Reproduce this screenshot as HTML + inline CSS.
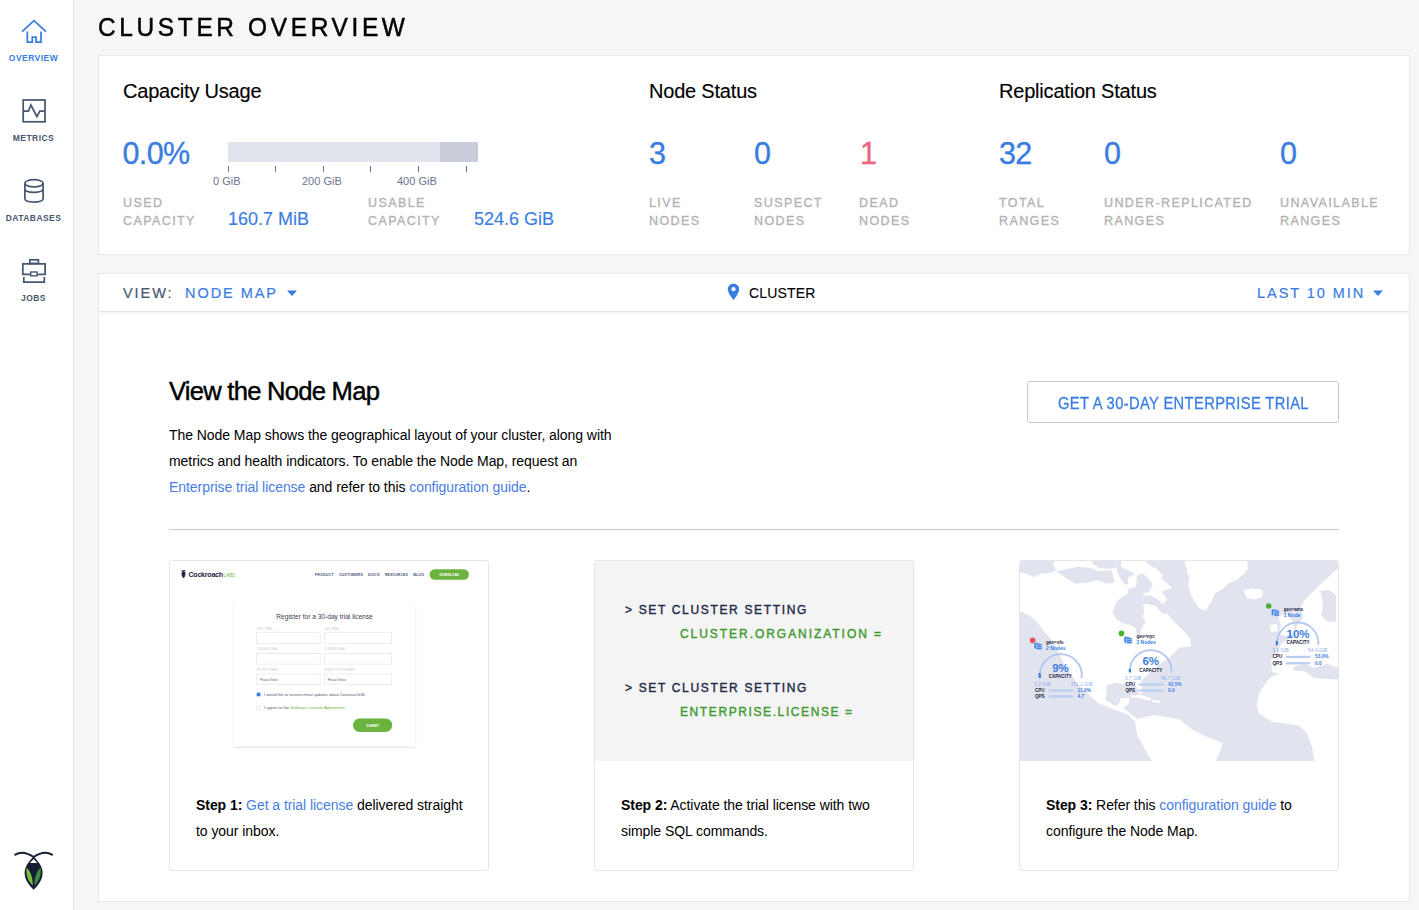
<!DOCTYPE html>
<html><head><meta charset="utf-8">
<style>
*{margin:0;padding:0;box-sizing:border-box}
html,body{width:1419px;height:910px;overflow:hidden;background:#f6f6f6;font-family:"Liberation Sans",sans-serif;color:#000}
.a{position:absolute;white-space:nowrap}
#side{position:absolute;left:0;top:0;width:74px;height:910px;background:#fff;border-right:1px solid #e8e8e8}
.card{position:absolute;background:#fff;border:1px solid #e9e9e9}
.h3{font-size:20px;color:#000;line-height:22px;letter-spacing:-0.2px;-webkit-text-stroke:0.15px currentColor}
.big{font-size:30.5px;color:#3a7de1;line-height:34px;letter-spacing:-0.6px;-webkit-text-stroke:0.35px currentColor}
.lbl{font-size:12.5px;font-weight:normal;color:#b3b3b3;letter-spacing:1.4px;line-height:18px;-webkit-text-stroke:0.35px currentColor}
.val{font-size:18px;color:#3a7de1;line-height:20px;-webkit-text-stroke:0.15px currentColor}
.tick{position:absolute;top:166px;width:1px;height:6px;background:#6c7390}
.tl{font-size:11px;color:#6c7390;line-height:12px}
.nav{position:absolute;left:0;width:67px;text-align:center;font-size:8.5px;font-weight:bold;color:#475872;letter-spacing:0.45px;line-height:10px}
.vb{font-size:14.5px;letter-spacing:1.95px;line-height:16px;-webkit-text-stroke:0.2px currentColor}
.p{font-size:14px;line-height:26px;color:#000;letter-spacing:-0.06px}
.lk{color:#4a7ee3}
.step{position:absolute;top:560px;width:320px;height:311px;background:#fff;border:1px solid #e6e6e6;border-radius:3px;overflow:hidden}
.sq{font-size:12px;font-weight:normal;letter-spacing:1.66px;line-height:14px;-webkit-text-stroke:0.4px currentColor}
</style></head><body>
<div id="side">
  <svg class="a" style="left:0;top:0" width="74" height="310" viewBox="0 0 74 310">
    <g fill="none" stroke-width="1.75" stroke-linejoin="miter">
      <path d="M22.6 31.2 L34 20.6 L45.4 31.2" stroke="#3a7de1" stroke-linecap="round"/>
      <path d="M27.3 31.5 V42 H32.3 V37.2 H36 V42 H41 V31.5" stroke="#3a7de1"/>
      <rect x="23.2" y="100" width="21.8" height="21.8" stroke="#475872"/>
      <path d="M23.2 111 H28.5 L30.9 105 L36.9 116.5 L39.8 111 H45" stroke="#475872"/>
      <ellipse cx="34" cy="183.3" rx="9.1" ry="3.6" stroke="#475872"/>
      <path d="M24.9 183.3 V198.5 C24.9 203.2 43.1 203.2 43.1 198.5 V183.3 M24.9 188.8 C24.9 193.6 43.1 193.6 43.1 188.8" stroke="#475872"/>
      <rect x="29.8" y="259.8" width="8.6" height="3.6" stroke="#475872"/>
      <path d="M22.8 274.4 V263.8 H45.1 V274.4 Z" stroke="#475872"/>
      <rect x="30.7" y="272" width="6.4" height="3.8" stroke="#475872" stroke-width="1.4" fill="#fff"/>
      <path d="M23.8 277 V282.2 H44.3 V277" stroke="#475872"/>
    </g>
  </svg>
  <div class="nav" style="top:53px;color:#3a7de1">OVERVIEW</div>
  <div class="nav" style="top:133px">METRICS</div>
  <div class="nav" style="top:213px">DATABASES</div>
  <div class="nav" style="top:293px">JOBS</div>
  <svg class="a" style="left:14px;top:850px" width="40" height="42" viewBox="0 0 40 42">
    <path d="M1.3 4.6 C6 1.6 12 1.8 19.6 7 C27.2 1.8 33.2 1.6 37.9 4.6" fill="none" stroke="#151c35" stroke-width="2" stroke-linecap="round"/>
    <path d="M19.6 6.4 C13.5 12.5 10.6 17.5 10.6 23 C10.8 30 15 35.2 19.6 39.8 C24.2 35.2 28.4 30 28.6 23 C28.6 17.5 25.7 12.5 19.6 6.4 Z" fill="#151c35"/>
    <path d="M19.6 8.9 L15.9 13.1 L23.3 13.1 Z" fill="#fff"/>
    <path d="M12.6 17.6 C11.6 25 13.8 31 18.7 35.8 C18.9 28 16.8 22 12.6 17.6 Z" fill="#7dbd42"/>
    <path d="M26.6 17.6 C27.6 25 25.4 31 20.5 35.8 C20.3 28 22.4 22 26.6 17.6 Z" fill="#3c8c40"/>
  </svg>
</div>

<div class="a" style="left:98px;top:12px;font-size:26.6px;letter-spacing:3.95px;color:#000;line-height:30px;-webkit-text-stroke:0.5px #000;transform:scaleX(0.92);transform-origin:0 0">CLUSTER OVERVIEW</div>

<div class="card" style="left:98px;top:55px;width:1312px;height:200px"></div>
<div class="a h3" style="left:123px;top:79.5px">Capacity Usage</div>
<div class="a big" style="left:122.5px;top:136px">0.0%</div>
<div class="a" style="left:228px;top:142px;width:250px;height:20px;background:#e2e4ed"></div>
<div class="a" style="left:440px;top:142px;width:38px;height:20px;background:#c9ccd9"></div>
<div class="tick" style="left:228px"></div>
<div class="tick" style="left:275px"></div>
<div class="tick" style="left:323px"></div>
<div class="tick" style="left:370px"></div>
<div class="tick" style="left:418px"></div>
<div class="tick" style="left:466px"></div>
<div class="a tl" style="left:213px;top:175px">0 GiB</div>
<div class="a tl" style="left:302px;top:175px">200 GiB</div>
<div class="a tl" style="left:397px;top:175px">400 GiB</div>
<div class="a lbl" style="left:123px;top:194px">USED<br>CAPACITY</div>
<div class="a val" style="left:228px;top:209px">160.7 MiB</div>
<div class="a lbl" style="left:368px;top:194px">USABLE<br>CAPACITY</div>
<div class="a val" style="left:474px;top:209px">524.6 GiB</div>

<div class="a h3" style="left:649px;top:79.5px">Node Status</div>
<div class="a big" style="left:649px;top:136px">3</div>
<div class="a big" style="left:754px;top:136px">0</div>
<div class="a big" style="left:860px;top:136px;color:#e8697a">1</div>
<div class="a lbl" style="left:649px;top:194px">LIVE<br>NODES</div>
<div class="a lbl" style="left:754px;top:194px">SUSPECT<br>NODES</div>
<div class="a lbl" style="left:859px;top:194px">DEAD<br>NODES</div>

<div class="a h3" style="left:999px;top:79.5px">Replication Status</div>
<div class="a big" style="left:999px;top:136px">32</div>
<div class="a big" style="left:1104px;top:136px">0</div>
<div class="a big" style="left:1280px;top:136px">0</div>
<div class="a lbl" style="left:999px;top:194px">TOTAL<br>RANGES</div>
<div class="a lbl" style="left:1104px;top:194px">UNDER-REPLICATED<br>RANGES</div>
<div class="a lbl" style="left:1280px;top:194px">UNAVAILABLE<br>RANGES</div>

<div class="card" style="left:98px;top:273px;width:1312px;height:629px"></div>
<div class="a" style="left:99px;top:311px;width:1310px;height:1px;background:#e3e3e3"></div><div class="a" style="left:99px;top:312px;width:1310px;height:3px;background:linear-gradient(#f3f3f3,#fff)"></div>
<div class="a vb" style="left:123px;top:285px;color:#475872">VIEW:</div>
<div class="a vb" style="left:185px;top:285px;color:#3a7de1">NODE MAP</div>
<svg class="a" style="left:287px;top:290px" width="11" height="7"><path d="M0 0.5 H10 L5 6 Z" fill="#3a7de1"/></svg>
<svg class="a" style="left:727px;top:283px" width="13" height="18" viewBox="0 0 13 18"><path d="M6.5 0.8 C3 0.8 0.8 3.4 0.8 6.4 C0.8 10 6.5 17 6.5 17 C6.5 17 12.2 10 12.2 6.4 C12.2 3.4 10 0.8 6.5 0.8 Z" fill="#3a7de1"/><circle cx="6.5" cy="6.2" r="2.1" fill="#fff"/></svg>
<div class="a vb" style="left:749px;top:285px;color:#000;font-size:14px;letter-spacing:0.15px;-webkit-text-stroke:0.1px #000">CLUSTER</div>
<div class="a vb" style="left:1257px;top:285px;color:#3a7de1">LAST 10 MIN</div>
<svg class="a" style="left:1373px;top:290px" width="11" height="7"><path d="M0 0.5 H10 L5 6 Z" fill="#3a7de1"/></svg>

<div class="a" style="left:169px;top:377px;font-size:25.6px;letter-spacing:-0.75px;line-height:28px;-webkit-text-stroke:0.45px #000">View the Node Map</div>
<div class="a p" style="left:169px;top:422px">The Node Map shows the geographical layout of your cluster, along with<br>metrics and health indicators. To enable the Node Map, request an<br><span class="lk">Enterprise trial license</span> and refer to this <span class="lk">configuration guide</span>.</div>
<div class="a" style="left:1027px;top:381px;width:312px;height:42px;border:1px solid #c5c8d4;border-radius:3px;background:#fff"></div>
<div class="a" style="left:1058px;top:394.5px;font-size:16px;color:#3a7de1;letter-spacing:0.4px;-webkit-text-stroke:0.3px #3a7de1;transform:scaleX(0.92);transform-origin:0 0;line-height:18px">GET A 30-DAY ENTERPRISE TRIAL</div>
<div class="a" style="left:169px;top:529px;width:1170px;height:1px;background:#c9ccd8"></div>

<!-- step cards -->
<div class="step" style="left:169px">
<svg class="a" style="left:-1px;top:-1px" width="320" height="201" viewBox="0 0 320 201">
<rect width="320" height="201" fill="#fff"/>
<path d="M12.5 10.5 h4 M13.4 11.5 c-1 2 -0.5 5 1.1 6.5 c1.6 -1.5 2.1 -4.5 1.1 -6.5 z" fill="#1c2542" stroke="#1c2542" stroke-width="0.7"/>
<text x="19.5" y="17" font-family="Liberation Sans, sans-serif" font-size="7" font-weight="bold" fill="#1c2542" letter-spacing="-0.2">Cockroach</text>
<text x="54.5" y="17" font-family="Liberation Sans, sans-serif" font-size="4.5" fill="#6bb33e">LABS</text>
<g font-family="Liberation Sans, sans-serif" font-size="3.3" font-weight="bold" fill="#4a5578" letter-spacing="0.1">
<text x="145.8" y="16" textLength="18.8" lengthAdjust="spacingAndGlyphs">PRODUCT</text><text x="169.9" y="16" textLength="24.1" lengthAdjust="spacingAndGlyphs">CUSTOMERS</text><text x="199" y="16" textLength="11.6" lengthAdjust="spacingAndGlyphs">DOCS</text><text x="215.9" y="16" textLength="23" lengthAdjust="spacingAndGlyphs">RESOURCES</text><text x="244.2" y="16" textLength="11.1" lengthAdjust="spacingAndGlyphs">BLOG</text>
</g>
<rect x="260.6" y="9.3" width="39.4" height="10.4" rx="5.2" fill="#6bb33e"/>
<text x="280.3" y="15.8" text-anchor="middle" font-family="Liberation Sans, sans-serif" font-size="3.3" font-weight="bold" fill="#fff">DOWNLOAD</text>
<defs><filter id="fs" x="-10%" y="-10%" width="120%" height="125%"><feDropShadow dx="0" dy="1" stdDeviation="1.2" flood-color="#8a94ad" flood-opacity="0.35"/></filter></defs>
<rect x="64.8" y="43.2" width="181.3" height="143.2" fill="#fff" filter="url(#fs)"/>
<text x="155.5" y="58.5" text-anchor="middle" font-family="Liberation Sans, sans-serif" font-size="6.6" fill="#3b4154">Register for a 30-day trial license</text>
<g fill="#c8ccd6" font-family="Liberation Sans, sans-serif" font-size="2.6">
<text x="87.7" y="69.5">FIRST NAME</text><text x="155.4" y="69.5">LAST NAME</text>
<text x="87.7" y="90.3">COMPANY NAME</text><text x="155.4" y="90.3">COMPANY EMAIL</text>
<text x="87.7" y="111.1">PROJECT PHASE</text><text x="155.4" y="111.1">REASON FOR INTEREST</text>
</g>
<g fill="#fff" stroke="#dfe2e8" stroke-width="0.6">
<rect x="87.7" y="72.2" width="63.4" height="11.4"/><rect x="155.4" y="72.2" width="67.3" height="11.4"/>
<rect x="87.7" y="93.3" width="63.4" height="10.8"/><rect x="155.4" y="93.3" width="67.3" height="10.8"/>
<rect x="87.7" y="114" width="63.4" height="10.7"/><rect x="155.4" y="114" width="67.3" height="10.7"/>
</g>
<g fill="#555b6e" font-family="Liberation Sans, sans-serif" font-size="3">
<text x="91" y="120.5">Please Select</text><text x="158.7" y="120.5">Please Select</text>
<text x="95" y="135.6" textLength="101.6" lengthAdjust="spacingAndGlyphs">I would like to receive email updates about CockroachDB.</text>
<text x="95" y="149" textLength="82" lengthAdjust="spacingAndGlyphs">I agree to the <tspan fill="#6bb33e">Software License Agreement.</tspan></text>
</g>
<rect x="87.7" y="132.7" width="3.7" height="3.6" fill="#3a7de1"/>
<rect x="87.9" y="146" width="3.3" height="3.3" fill="none" stroke="#c8ccd6" stroke-width="0.4"/>
<rect x="184" y="158.6" width="39.2" height="13.3" rx="6.6" fill="#6bb33e"/>
<text x="203.6" y="166.5" text-anchor="middle" font-family="Liberation Sans, sans-serif" font-size="3.3" font-weight="bold" fill="#fff">SUBMIT</text>
</svg>
</div>
<div class="step" style="left:594px">
  <div class="a" style="left:0;top:0;width:320px;height:200px;background:#f4f4f4"></div>
  <div class="a sq" style="left:30px;top:42px;color:#1f2a48">&gt; SET CLUSTER SETTING</div>
  <div class="a sq" style="left:85px;top:66px;color:#3f9a2f;letter-spacing:1.95px">CLUSTER.ORGANIZATION =</div>
  <div class="a sq" style="left:30px;top:120px;color:#1f2a48">&gt; SET CLUSTER SETTING</div>
  <div class="a sq" style="left:85px;top:144px;color:#3f9a2f;letter-spacing:1.6px">ENTERPRISE.LICENSE =</div>
</div>
<div class="step" style="left:1019px">
<svg class="a" style="left:-1px;top:-1px" width="320" height="201" viewBox="0 0 320 201">
<rect width="320" height="201" fill="#e1e4ee"/>
<g fill="#fff">
<path d="M0 0 L129.5 0 L126.8 1.8 L130.3 5.3 L137.4 8.8 L143.5 14.9 L142.6 19.3 L147.9 22.9 L153.2 28.1 L142.6 31.6 L147.9 39.6 L144.4 44 L137.4 45.7 L139.1 49.2 L144.4 54.5 L147.9 52.7 L154.9 61.5 L165.5 72.1 L171 78 L172 86 L160 88 L151 97 L138 106 L125 118 L122 122 L124 133 L121 134 L117 126 L108 124 L96 123 L88 125 L86.6 140 L96 146 L100 144 L102 138 L110 138 L110 144 L104 148 L118 159 L135 155 L160 159 L173 169.6 L186 176 L203.5 183 L202 189 L197 201 L132.7 201 L123.5 185 L118 175 L116 162 L110 155 L96 150 L79 143 L58 123.5 L43 100 L38 88 L34 82 L30 77 L24 70 L18 62 L10 55 L0 51 Z"/>
<path d="M111.6 135 L122 134.5 L132.7 139 L130 140.6 L120 138 L111.6 137 Z M133 140 L142 141 L140 143 L133 142 Z"/>
<path d="M166 0 L228 0 L229 9 L226 13 L218 20 L210 23 L205 28 L196 33 L193 40 L190 45 L187 51 L180 48 L176 42 L172 35 L169 25 L171 17 L168 14 L168 9 L166 4 Z"/>
<path d="M225 30 L232 28.6 L240 29 L244 31 L243 37 L236 39.6 L228 38 L226 34 Z"/>
<path d="M320 8 L320 108 L308 104 L295 108 L286 104 L276 106 L272 113 L262 114 L253 112 L252 100 L258 92 L262 84 L268 80 L274 76 L278 66 L284 58 L282 46 L286 39.6 L297 28.6 L306 20 L317 10 Z"/>
<path d="M259 56 L268 54 L274 62 L276 72 L268 76 L260 74 L262 65 Z M251 65 L258 64 L259 71 L252 72.5 Z"/>
<path d="M250.5 118 L269 110 L286 111.6 L295 118 L320 119.5 L320 201 L295.3 201 L292.7 185.4 L287.4 172 L279.5 165.6 L253 161.7 L240 153.8 L237.7 145 L240 132.7 Z"/>
</g>
<g fill="#e1e4ee">
<path d="M93.4 52.7 L96.9 42.2 L102.2 37.8 L109.2 33.4 L109.2 29 L117.1 26.4 L118 15.8 L123.3 13.2 L128.6 17.6 L133.8 24.6 L130.3 31.6 L124.2 34.3 L123.3 36 L131.2 35.2 L139.1 39.6 L144.4 44.8 L139.1 47.5 L135.6 45.7 L128.6 44 L124.2 44 L125.1 52.7 L123.3 56.3 L126.8 61.5 L123.3 66.8 L121.5 70.3 L121.5 75.6 L118 75.6 L116.3 67.7 L111 65 L104 63.3 L97.8 59.8 Z"/>
<path d="M0 0 L36 0 L34 4.5 L37 10 L33 12.4 L22.5 13.5 L14.7 17 L6.8 13.5 L0 12.4 Z"/>
<path d="M37.2 11.3 L48.5 9 L58.6 6.8 L72 8 L79 11.3 L92.4 10 L95.8 22.5 L88 23.7 L79 20.3 L67.6 22.5 L56.4 23.7 L48.5 19.2 Z"/>
<path d="M72 0 L101 0 L100 6 L92 9 L80 8 L74 4 Z"/>
<path d="M95.2 0 L102.2 0 L102.2 7 L109.2 10.5 L116.3 14 L109.2 17.6 L109.2 24.6 L105.7 24.6 L100.4 17.6 L97.8 8.8 Z"/>
<path d="M301.5 31 L310 30 L317 35 L317 61.5 L308 61.5 L302 55 L304 45 Z"/>
</g>
<g fill="none" stroke="#b0c6f0" stroke-width="1.8">
<path d="M21 118 A21 21 0 1 1 62.6 118"/>
<path d="M111 112.3 A20.8 20.8 0 1 1 152.5 112.3"/>
<path d="M258.1 85.2 A20.7 20.7 0 1 1 299.3 85.2"/>
</g>
<g fill="none" stroke="#3a7de1" stroke-width="2.2">
<path d="M21 118 A21 21 0 0 1 20.6 113"/>
<path d="M111 112.3 A20.8 20.8 0 0 1 110.8 109"/>
<path d="M258.1 85.2 A20.7 20.7 0 0 1 257.8 81"/>
</g>
<circle cx="13.7" cy="80.4" r="2.8" fill="#e5505b"/>
<circle cx="102.5" cy="73.4" r="2.8" fill="#4caf30"/>
<circle cx="249.7" cy="46" r="2.8" fill="#4caf30"/>
<g fill="#3a7de1" stroke="#fff" stroke-width="0.5">
<g transform="translate(15,81.5)"><rect x="0" y="1" width="6" height="6.5" rx="1.2"/><rect x="2.2" y="2.2" width="6" height="6" rx="1.2"/><path d="M2.2 4.2 H8.2 M2.2 6.2 H8.2" /></g>
<g transform="translate(105,75.5)"><rect x="0" y="1" width="6" height="6.5" rx="1.2"/><rect x="2.2" y="2.2" width="6" height="6" rx="1.2"/><path d="M2.2 4.2 H8.2 M2.2 6.2 H8.2" /></g>
<g transform="translate(252.3,48)"><rect x="0" y="1" width="6" height="6.5" rx="1.2"/><rect x="2.2" y="2.2" width="6" height="6" rx="1.2"/><path d="M2.2 4.2 H8.2 M2.2 6.2 H8.2" /></g>
</g>
<g font-family="Liberation Sans, sans-serif" font-weight="bold">
<g fill="#1c2542" font-size="4.5">
<text x="27" y="84.2">geo=sfo</text><text x="117.4" y="78.2">geo=nyc</text><text x="264.7" y="50.7">geo=ams</text>
</g>
<g fill="#3a7de1" font-size="5">
<text x="27" y="90.2">2 Nodes</text><text x="117.4" y="84.2">2 Nodes</text><text x="264.7" y="56.8">1 Node</text>
</g>
<g fill="#3a7de1" font-size="11.5" text-anchor="middle">
<text x="41.5" y="111.6">9%</text><text x="131.7" y="105">6%</text><text x="279" y="77.6">10%</text>
</g>
<g fill="#1c2542" font-size="4.6" text-anchor="middle">
<text x="41.2" y="118.3">CAPACITY</text><text x="131.7" y="111.7">CAPACITY</text><text x="279" y="84.1">CAPACITY</text>
<text x="20.8" y="132">CPU</text><text x="20.8" y="138">QPS</text>
<text x="111.3" y="126">CPU</text><text x="111.3" y="132">QPS</text>
<text x="258.4" y="98.4">CPU</text><text x="258.4" y="105">QPS</text>
</g>
<g fill="#8fb0ec" font-size="5" font-weight="normal">
<text x="15" y="125.6">3.2 GiB</text><text x="51.4" y="125.6">351.1 GiB</text>
<text x="105.7" y="119.5">3.7 GiB</text><text x="142" y="119.5">45.7 GiB</text>
<text x="253.2" y="91.8">3.6 GiB</text><text x="289" y="91.8">54.4 GiB</text>
</g>
<g fill="#3a7de1" font-size="4.8">
<text x="58.6" y="132">11.0%</text><text x="58.6" y="138">4.7</text>
<text x="149" y="126">42.5%</text><text x="149" y="132">0.0</text>
<text x="296" y="98.4">53.0%</text><text x="296" y="105">0.0</text>
</g>
</g>
<g fill="#b9cdf3">
<rect x="29.6" y="129.4" width="24.4" height="2.2"/><rect x="29.6" y="135.4" width="24.4" height="2.2"/>
<rect x="119.5" y="123.4" width="25" height="2.2"/><rect x="119.5" y="129.4" width="25" height="2.2"/>
<rect x="267" y="95.8" width="24.4" height="2.2"/><rect x="267" y="102.2" width="24.4" height="2.2"/>
</g>
</svg>
</div>
<div class="a p" style="left:196px;top:792px"><b>Step 1:</b> <span class="lk">Get a trial license</span> delivered straight<br>to your inbox.</div>
<div class="a p" style="left:621px;top:792px"><b>Step 2:</b> Activate the trial license with two<br>simple SQL commands.</div>
<div class="a p" style="left:1046px;top:792px"><b>Step 3:</b> Refer this <span class="lk">configuration guide</span> to<br>configure the Node Map.</div>

</body></html>
